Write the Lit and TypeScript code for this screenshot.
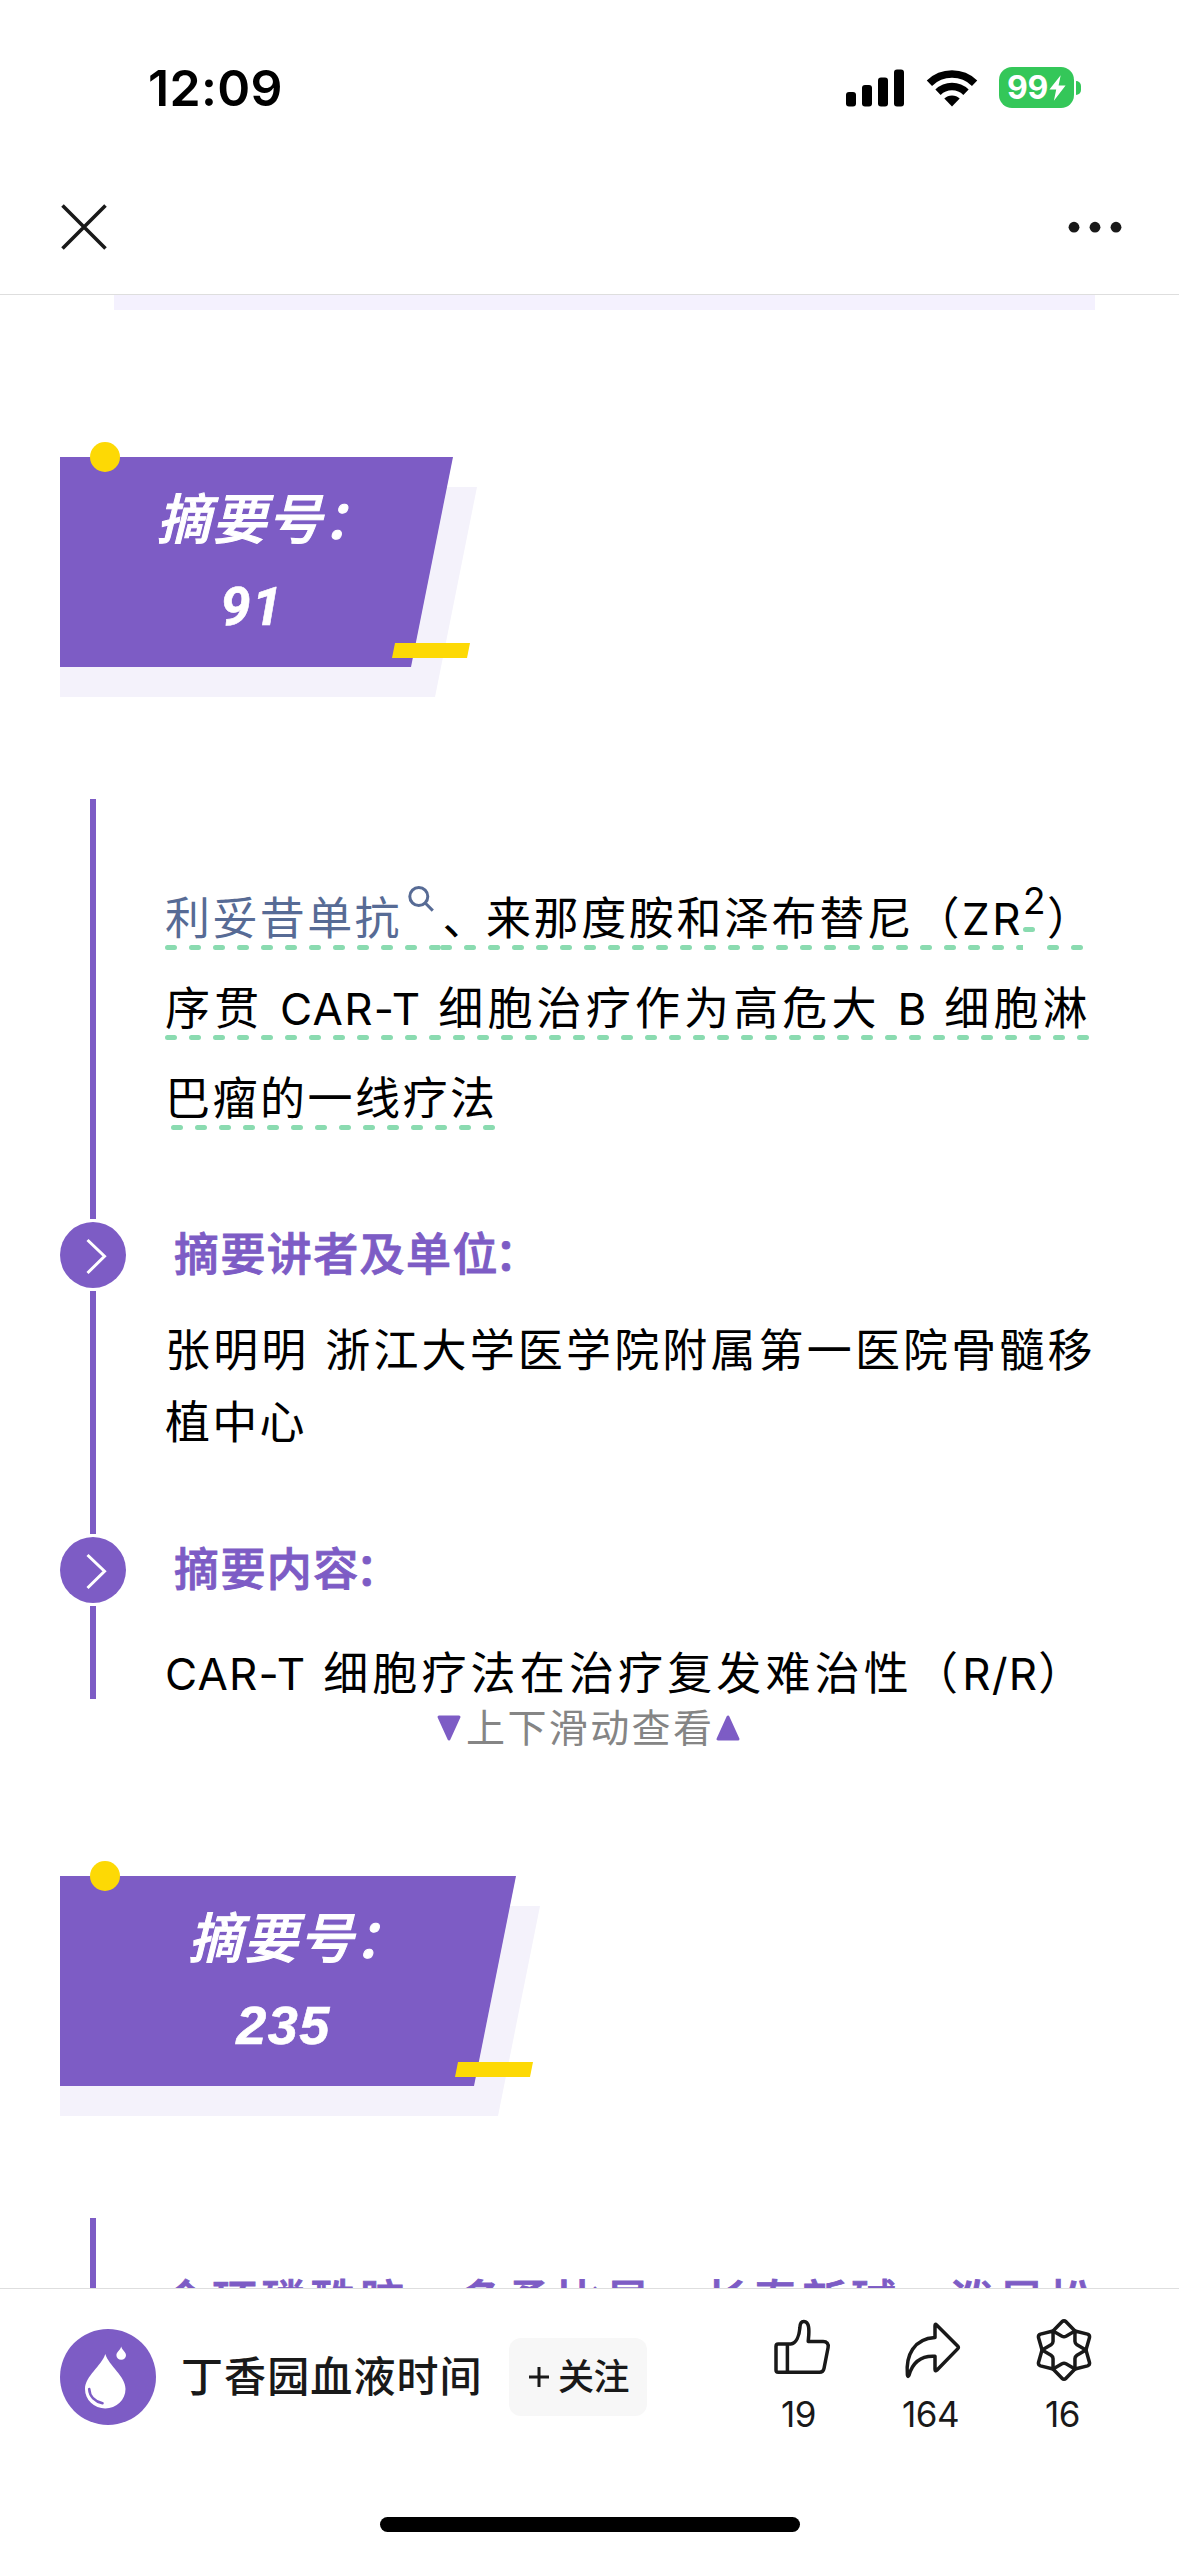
import { LitElement, html, css, svg } from "lit";
import { customElement, property } from "lit/decorators.js";

const shared = css`
  * {
    box-sizing: border-box;
  }
  svg {
    display: block;
  }
`;

/** Dashed green rule drawn under a run of text. */
@customElement("dash-rule")
export class DashRule extends LitElement {
  static styles = [
    shared,
    css`
      :host {
        display: block;
        position: absolute;
        left: 0;
        right: 0;
        height: 5px;
        overflow: hidden;
      }
    `,
  ];
  render() {
    return html`<svg width="100%" height="5">
      <line x1="2.5" y1="2.5" x2="1200" y2="2.5" stroke="#8adbb0" stroke-width="5" stroke-linecap="round" stroke-dasharray="7 17" />
    </svg>`;
  }
}

@customElement("status-bar")
export class StatusBar extends LitElement {
  static styles = [
    shared,
    css`
      :host {
        display: flex;
        justify-content: space-between;
        align-items: center;
        height: 175px;
        padding: 0 98px 0 148px;
        color: #000;
      }
      .time {
        font: 600 50px/60px Inter, sans-serif;
        letter-spacing: 0.3px;
      }
      .icons {
        display: flex;
        align-items: center;
      }
      .wifi {
        margin: 0 21px 0 22px;
      }
      .battery {
        display: flex;
        align-items: center;
        justify-content: center;
        gap: 1px;
        width: 75px;
        height: 41px;
        border-radius: 13px;
        background: #34c759;
        color: #fff;
        font: 700 32px/41px Inter, sans-serif;
        letter-spacing: -0.4px;
      }
      .nub {
        width: 5px;
        height: 14px;
        margin-left: 2px;
        border-radius: 0 5px 5px 0;
        background: #34c759;
      }
    `,
  ];
  render() {
    return html`
      <div class="time">12:09</div>
      <div class="icons">
        <svg width="58" height="38" viewBox="0 0 58 38">
          <rect x="0" y="23" width="10" height="14.5" rx="3" />
          <rect x="16" y="16" width="10" height="21.5" rx="3" />
          <rect x="32" y="8.5" width="10" height="29" rx="3" />
          <rect x="48" y="0.5" width="10" height="37" rx="3" />
        </svg>
        <svg class="wifi" width="52" height="38" viewBox="0 0 52 38">
          <path d="M3.4 14.2A32.5 32.5 0 0 1 48.6 14.2" fill="none" stroke="#000" stroke-width="7.6" />
          <path d="M12 23.2A20 20 0 0 1 40 23.2" fill="none" stroke="#000" stroke-width="7.6" />
          <path d="M26 37.5L18.3 29.6A11 11 0 0 1 33.7 29.6Z" />
        </svg>
        <div class="battery">
          <span>99</span>
          <svg width="17" height="26" viewBox="0 0 16 24"><path d="M11 0L0.4 13.4H6.8L4.6 24L15.6 9.6H9Z" fill="#fff" /></svg>
        </div>
        <div class="nub"></div>
      </div>
    `;
  }
}

@customElement("nav-bar")
export class NavBar extends LitElement {
  static styles = [
    shared,
    css`
      :host {
        display: flex;
        box-sizing: border-box;
        justify-content: space-between;
        height: 120px;
        padding: 29px 57px 0 61px;
        border-bottom: 1px solid #dedede;
      }
    `,
  ];
  render() {
    return html`
      <svg width="46" height="46" viewBox="0 0 46 46">
        <path d="M1.5 1.5L44.5 44.5M44.5 1.5L1.5 44.5" stroke="#191919" stroke-width="3.6" />
      </svg>
      <svg width="54" height="46" viewBox="0 0 54 46" fill="#191919">
        <circle cx="6" cy="23.2" r="5.4" />
        <circle cx="27" cy="23.2" r="5.4" />
        <circle cx="48" cy="23.2" r="5.4" />
      </svg>
    `;
  }
}

@customElement("abstract-badge")
export class AbstractBadge extends LitElement {
  static styles = [
    shared,
    css`
      :host {
        display: block;
        position: relative;
        width: max-content;
        height: 210px;
        margin-left: 60px;
      }
      .shade {
        position: absolute;
        inset: 30px -24px -30px 0;
        background: #f4f2fb;
        clip-path: polygon(0 0, 100% 0, calc(100% - 42px) 100%, 0 100%);
      }
      .plate {
        position: relative;
        width: 393px;
        height: 210px;
        padding: 19px 9px 0 0;
        background: #7d5cc5;
        clip-path: polygon(0 0, 100% 0, calc(100% - 42px) 100%, 0 100%);
        color: #fff;
        text-align: center;
        font: italic 700 54px/87px Inter, "Noto Sans CJK SC", sans-serif;
        letter-spacing: 1.5px;
        white-space: nowrap;
      }
      .plate.wide {
        width: 456px;
      }
      .label {
        margin-left: -4px;
        font-weight: 500;
        -webkit-text-stroke: 1px #fff;
      }
      .colon {
        margin-left: -1px;
        letter-spacing: -33px;
      }
      .num {
        font-family: Roboto, sans-serif;
        -webkit-text-stroke: 0.6px #fff;
      }
      .wide .num {
        font-family: "Liberation Sans", sans-serif;
      }
      .dot {
        position: absolute;
        left: 30px;
        top: -15px;
        width: 30px;
        height: 30px;
        border-radius: 50%;
        background: #fdd905;
      }
      .bar {
        position: absolute;
        right: -17px;
        bottom: 9px;
        width: 78px;
        height: 15px;
        background: #fdd905;
        clip-path: polygon(3px 0, 100% 0, calc(100% - 3px) 100%, 0 100%);
      }
    `,
  ];
  @property() number = "";
  @property({ type: Boolean }) wide = false;
  render() {
    return html`
      <div class="shade"></div>
      <div class="plate ${this.wide ? "wide" : ""}">
        <div class="label">摘要号<span class="colon">：</span></div>
        <div class="num">${this.number}</div>
      </div>
      <div class="dot"></div>
      <div class="bar"></div>
    `;
  }
}

@customElement("time-line")
export class TimeLine extends LitElement {
  static styles = [
    shared,
    css`
      :host {
        display: block;
        color: #000;
        font: 400 45px/72px Inter, "Noto Sans CJK SC", sans-serif;
        white-space: nowrap;
      }
      .seg {
        margin-left: 90px;
        padding-left: 69px;
        border-left: 6px solid #7d5cc5;
      }
      .title {
        height: 420px;
        padding-top: 75px;
        line-height: 90px;
      }
      .unit {
        height: 243px;
        padding-top: 24px;
      }
      .content {
        height: 93px;
        padding-top: 44px;
        line-height: 48px;
      }
      .row {
        display: flex;
        position: relative;
      }
      .part {
        position: relative;
      }
      .part dash-rule,
      .row > dash-rule {
        top: 71px;
      }
      .link {
        display: flex;
        width: 274.5px;
        color: #576b95;
        letter-spacing: 2.4px;
      }
      .lens {
        margin: 12px 0 0 6px;
      }
      .drugs {
        width: 583.5px;
        letter-spacing: 2.6px;
      }
      .comma {
        padding-left: 3px;
        letter-spacing: -1.5px;
      }
      .power {
        width: 24px;
        font-size: 37px;
        line-height: 53px;
      }
      .part.power dash-rule {
        top: 53px;
        right: 10px;
      }
      .close {
        width: 48px;
      }
      .loose {
        width: 930px;
        letter-spacing: 4.15px;
      }
      .tail {
        width: 330px;
        letter-spacing: 2.5px;
      }
      .row.tail > dash-rule {
        left: 6px;
        right: -6px;
      }
      .speaker {
        letter-spacing: 3.15px;
      }
      .centre {
        letter-spacing: 2.3px;
      }
      .en {
        font-size: 44px;
      }
      .en-wide {
        font-size: 44px;
        letter-spacing: 1.2px;
      }
      .node {
        display: flex;
        align-items: center;
        height: 72px;
        padding-left: 60px;
        gap: 48px;
        color: #7d5cc5;
        font-weight: 500;
        letter-spacing: 1.4px;
        -webkit-text-stroke: 0.9px #7d5cc5;
      }
      .colon {
        margin-left: -4px;
      }
    `,
  ];
  node(text: string) {
    return html`<div class="node">
      <svg width="66" height="66" viewBox="0 0 66 66">
        <circle cx="33" cy="33" r="33" fill="#7d5cc5" />
        <path d="M27.5 18L44.5 34.2L27.5 51" fill="none" stroke="#fff" stroke-width="3" />
      </svg>
      <div>${text}<span class="colon">：</span></div>
    </div>`;
  }
  render() {
    return html`
      <div class="seg title">
        <div class="row">
          <div class="part link">
            <span>利妥昔单抗</span>
            <svg class="lens" width="26" height="26" viewBox="0 0 26 26" fill="none" stroke="#576b95" stroke-width="3">
              <circle cx="10.8" cy="10.5" r="9" />
              <path d="M17.2 17L24.8 24.6" />
            </svg>
            <dash-rule></dash-rule>
          </div>
          <div class="part drugs"><span class="comma">、</span>来那度胺和泽布替尼（<span class="en">ZR</span><dash-rule></dash-rule></div>
          <div class="part power">2<dash-rule></dash-rule></div>
          <div class="part close">）<dash-rule></dash-rule></div>
        </div>
        <div class="row loose">
          <div>序贯 <span class="en-wide">CAR-T</span> 细胞治疗作为高危大 <span class="en-wide">B</span> 细胞淋</div>
          <dash-rule></dash-rule>
        </div>
        <div class="row tail">
          <div>巴瘤的一线疗法</div>
          <dash-rule></dash-rule>
        </div>
      </div>
      ${this.node("摘要讲者及单位")}
      <div class="seg unit">
        <div class="speaker">张明明 浙江大学医学院附属第一医院骨髓移</div>
        <div class="centre">植中心</div>
      </div>
      ${this.node("摘要内容")}
      <div class="seg content">
        <div class="loose"><span class="en-wide">CAR-T</span> 细胞疗法在治疗复发难治性（<span class="en-wide">R/R</span>）</div>
      </div>
    `;
  }
}

@customElement("bottom-bar")
export class BottomBar extends LitElement {
  static styles = [
    shared,
    css`
      :host {
        display: flex;
        box-sizing: border-box;
        flex-direction: column;
        height: 268px;
        border-top: 1px solid #dedede;
        background: #fff;
        color: #191919;
        font: 500 42px/60px Inter, "Noto Sans CJK SC", sans-serif;
      }
      .row {
        display: flex;
        height: 228px;
        padding: 28px 48px 0 60px;
      }
      .avatar {
        margin-top: 12px;
      }
      .name {
        margin: 30px 0 0 25px;
        width: 328px;
        letter-spacing: 1.1px;
        white-space: nowrap;
      }
      .follow {
        display: flex;
        align-items: center;
        gap: 9px;
        width: 138px;
        height: 78px;
        margin-top: 21px;
        padding-left: 20px;
        border-radius: 12px;
        background: #f7f7f7;
        font-size: 36px;
        line-height: 78px;
        letter-spacing: -0.5px;
        white-space: nowrap;
      }
      .acts {
        display: flex;
        margin-left: auto;
      }
      .act {
        display: flex;
        flex-direction: column;
        align-items: center;
        width: 132px;
        font: 400 35px/44px Inter, sans-serif;
        letter-spacing: -0.5px;
      }
      .act svg {
        margin-bottom: 9px;
      }
      .act span {
        margin-left: -5px;
      }
      .home {
        width: 420px;
        height: 15px;
        margin: 0 auto;
        border-radius: 8px;
        background: #000;
      }
    `,
  ];
  render() {
    const petal = "M-11 -19L-2 -28.3Q0 -30 2 -28.3L11 -19L2 -13.8Q0 -12.8 -2 -13.8Z";
    return html`
      <div class="row">
        <svg class="avatar" width="96" height="96" viewBox="0 0 96 96">
          <circle cx="48" cy="48" r="48" fill="#7d5cc5" />
          <path d="M45.3 25C49 37 65.5 47 65.5 60A20.2 19.5 0 0 1 25 60C25 47 41.5 37 45.3 25Z" fill="#fff" />
          <path d="M61.2 17.5C62 21 66 23 66 26.2A4.8 4.5 0 0 1 56.4 26.2C56.4 23 60.4 21 61.2 17.5Z" fill="#fff" />
          <path d="M29.2 60C29.6 67.5 35 72.5 42.5 74.2" fill="none" stroke="#7d5cc5" stroke-width="2.6" stroke-linecap="round" />
        </svg>
        <div class="name">丁香园血液时间</div>
        <div class="follow">
          <svg width="20" height="20" viewBox="0 0 20 20"><path d="M10 0V20M0 10H20" stroke="#191919" stroke-width="3" /></svg>
          <span>关注</span>
        </div>
        <div class="acts">
          <div class="act">
            <svg width="66" height="66" viewBox="-1.2 0 66 66" fill="none" stroke="#191919" stroke-width="3.5" stroke-linejoin="round">
              <path d="M9 27H21.5C27 26.5 30 19 30.7 10.5C30.9 2.6 38 2.6 39.4 10C40.2 15 39.4 20 39 24.4H54C57.6 24.4 59.6 27 58.9 30.5L54.8 51.5C54.3 54 52.8 55.3 50.3 55.3H9Q6.8 55.3 6.8 53V29.2Q6.8 27 9 27ZM18.2 27V55.3" />
            </svg>
            <span>19</span>
          </div>
          <div class="act">
            <svg width="66" height="66" viewBox="0 0 66 66" fill="none" stroke="#191919" stroke-width="3.5" stroke-linejoin="round">
              <path d="M36.6 8L57.6 29Q59 30.4 57.6 31.9L36.8 53.2Q35 54.7 35 52.3V39.3C22 38.5 13 44 8.9 58.5Q7.8 60.5 7.4 58C5.5 38 14 21.7 35 20.5V8.7Q35 6.4 36.6 8Z" />
            </svg>
            <span>164</span>
          </div>
          <div class="act">
            <svg width="66" height="66" viewBox="-32 -33 66 66" fill="none" stroke="#191919" stroke-width="3.5" stroke-linejoin="round">
              ${[0, 60, 120, 180, 240, 300].map((a) => svg`<path d=${petal} transform="rotate(${a})" />`)}
            </svg>
            <span>16</span>
          </div>
        </div>
      </div>
      <div class="home"></div>
    `;
  }
}

@customElement("app-root")
export class AppRoot extends LitElement {
  static styles = [
    shared,
    css`
      :host {
        display: flex;
        flex-direction: column;
        width: 1179px;
        height: 2556px;
        overflow: hidden;
        background: #fff;
      }
      .article {
        flex: 1;
        min-height: 0;
        overflow: hidden;
      }
      .strip {
        width: 981px;
        height: 15px;
        margin: 0 0 147px 114px;
        background: #f4f1fe;
      }
      time-line {
        margin-top: 132px;
      }
      .hint {
        display: flex;
        align-items: center;
        gap: 5px;
        height: 57px;
        margin-bottom: 120px;
        padding-left: 437px;
        color: #858585;
        font: 400 39px/57px Inter, "Noto Sans CJK SC", sans-serif;
        letter-spacing: 2.4px;
      }
      .hint span {
        width: 245px;
        white-space: nowrap;
      }
      .next {
        height: 120px;
        margin: 132px 0 0 90px;
        padding: 45px 0 0 67px;
        border-left: 6px solid #7d5cc5;
        color: #7d5cc5;
        font: 500 45px/72px "Noto Sans CJK SC", sans-serif;
        letter-spacing: 4.15px;
        -webkit-text-stroke: 0.9px #7d5cc5;
        white-space: nowrap;
      }
    `,
  ];
  render() {
    return html`
      <status-bar></status-bar>
      <nav-bar></nav-bar>
      <div class="article">
        <div class="strip"></div>
        <abstract-badge number="91"></abstract-badge>
        <time-line></time-line>
        <div class="hint">
          <svg width="24" height="26" viewBox="0 0 24 26"><path d="M2 2H22L12 24Z" fill="#7d5cc5" stroke="#7d5cc5" stroke-width="3" stroke-linejoin="round" /></svg>
          <span>上下滑动查看</span>
          <svg width="24" height="26" viewBox="0 0 24 26"><path d="M2 24H22L12 2Z" fill="#7d5cc5" stroke="#7d5cc5" stroke-width="3" stroke-linejoin="round" /></svg>
        </div>
        <abstract-badge number="235" wide></abstract-badge>
        <div class="next">含环磷酰胺、多柔比星、长春新碱、泼尼松</div>
      </div>
      <bottom-bar></bottom-bar>
    `;
  }
}
